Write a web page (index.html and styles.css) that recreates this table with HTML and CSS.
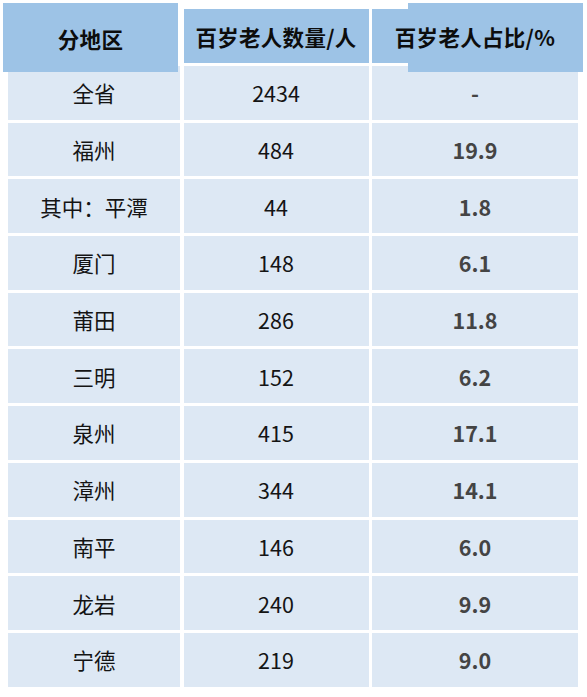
FILE: index.html
```html
<!DOCTYPE html>
<html lang="zh-CN">
<head>
<meta charset="utf-8">
<link rel="stylesheet" href="styles.css">
</head>
<body>
<div class="table">
  <div class="th th-first">分地区</div>
  <div class="th">百岁老人数量/人</div>
  <div class="th th-last"><span>百岁老人占比/%</span></div>

  <div class="td">全省</div><div class="td">2434</div><div class="td pct">-</div>
  <div class="td">福州</div><div class="td">484</div><div class="td pct">19.9</div>
  <div class="td">其中：平潭</div><div class="td">44</div><div class="td pct">1.8</div>
  <div class="td">厦门</div><div class="td">148</div><div class="td pct">6.1</div>
  <div class="td">莆田</div><div class="td">286</div><div class="td pct">11.8</div>
  <div class="td">三明</div><div class="td">152</div><div class="td pct">6.2</div>
  <div class="td">泉州</div><div class="td">415</div><div class="td pct">17.1</div>
  <div class="td">漳州</div><div class="td">344</div><div class="td pct">14.1</div>
  <div class="td">南平</div><div class="td">146</div><div class="td pct">6.0</div>
  <div class="td">龙岩</div><div class="td">240</div><div class="td pct">9.9</div>
  <div class="td">宁德</div><div class="td">219</div><div class="td pct">9.0</div>
</div>
</body>
</html>
```

FILE: styles.css
```css
html, body {
  margin: 0;
  padding: 0;
  background: #ffffff;
}

body {
  font-family: "Noto Sans CJK SC", "Noto Sans", sans-serif;
  width: 587px;
  height: 697px;
  overflow: hidden;
}

.table {
  display: grid;
  grid-template-columns: 172px 185px 206px;
  grid-template-rows: 54px;
  grid-auto-rows: 53.7px;
  column-gap: 3.5px;
  row-gap: 3px;
  padding: 9px 0 0 8px;
}

.th {
  background: #9dc3e6;
  color: #0d0d0d;
  font-weight: 700;
  font-size: 21.5px;
  display: flex;
  align-items: center;
  justify-content: center;
  position: relative;
  letter-spacing: 0.3px;
}

.th-first {
  margin: -6px 2px -9px -5px;
  z-index: 2;
  padding-top: 2px;
}

.th-last {
  z-index: 2;
}

.th-last::before {
  content: "";
  position: absolute;
  left: 36px;
  right: -5px;
  top: -6px;
  bottom: -9px;
  background: #9dc3e6;
  z-index: 0;
}

.th-last span {
  position: relative;
  z-index: 1;
}

.td {
  background: #dde8f4;
  color: #141414;
  font-size: 21.5px;
  display: flex;
  align-items: center;
  justify-content: center;
}

.pct {
  font-weight: 700;
  color: #444444;
}
```
